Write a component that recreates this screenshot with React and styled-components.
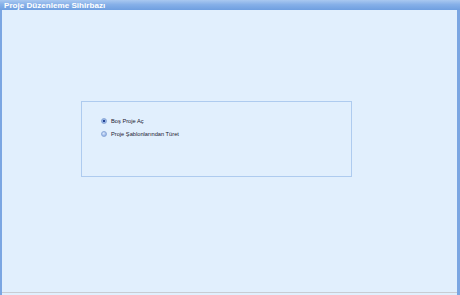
import styled, { createGlobalStyle } from "styled-components";

const GlobalStyle = createGlobalStyle`
  html, body {
    margin: 0;
    padding: 0;
    background: #e1effd;
  }
  body {
    font-family: "Liberation Sans", "Open Sans", sans-serif;
  }
`;

const Window = styled.div`
  width: 460px;
  height: 295px;
  display: flex;
  flex-direction: column;
  background: #e1effd;
  box-sizing: border-box;
`;

const TitleBar = styled.div`
  height: 10px;
  flex: none;
  display: flex;
  align-items: center;
  padding-left: 4px;
  background: linear-gradient(to bottom, #a9c8f0 0%, #86b0e8 45%, #6f9fe0 100%);
  color: #ffffff;
  font-weight: bold;
  font-size: 8.1px;
  white-space: nowrap;
  overflow: hidden;
`;

const Body = styled.div`
  flex: 1;
  display: flex;
  flex-direction: column;
  border-left: 2px solid #7ba6e2;
  border-right: 3px solid #7ba6e2;
`;

const Content = styled.div`
  flex: 1;
  padding: 91px 0 0 79px;
`;

const Panel = styled.div`
  width: 271px;
  height: 76px;
  box-sizing: border-box;
  border: 1px solid #aecbef;
  padding: 16px 0 0 19px;
  display: flex;
  flex-direction: column;
  gap: 7px;
`;

const Option = styled.label`
  display: flex;
  align-items: center;
  gap: 4px;
  height: 6px;
  font-size: 5.7px;
  color: #1c2030;
  white-space: nowrap;
`;

const Radio = styled.span`
  width: 6px;
  height: 6px;
  border-radius: 50%;
  flex: none;
  box-sizing: border-box;
  border: 0.5px solid #8aa8d8;
  background: ${({ $checked }) =>
    $checked
      ? "radial-gradient(circle, #1d3778 0%, #24449a 32%, #9fbbe8 42%, #7e9fdc 100%)"
      : "radial-gradient(circle at 40% 35%, #dce9fb 0%, #a6c0ec 55%, #7c9ddc 100%)"};
`;

const Footer = styled.div`
  height: 2px;
  flex: none;
  border-top: 1px solid #c8ccd3;
  background: #e1effd;
`;

export default function App() {
  return (
    <Window>
      <GlobalStyle />
      <TitleBar>Proje Düzenleme Sihirbazı</TitleBar>
      <Body>
        <Content>
          <Panel>
            <Option>
              <Radio $checked />
              Boş Proje Aç
            </Option>
            <Option>
              <Radio />
              Proje Şablonlarından Türet
            </Option>
          </Panel>
        </Content>
        <Footer />
      </Body>
    </Window>
  );
}
